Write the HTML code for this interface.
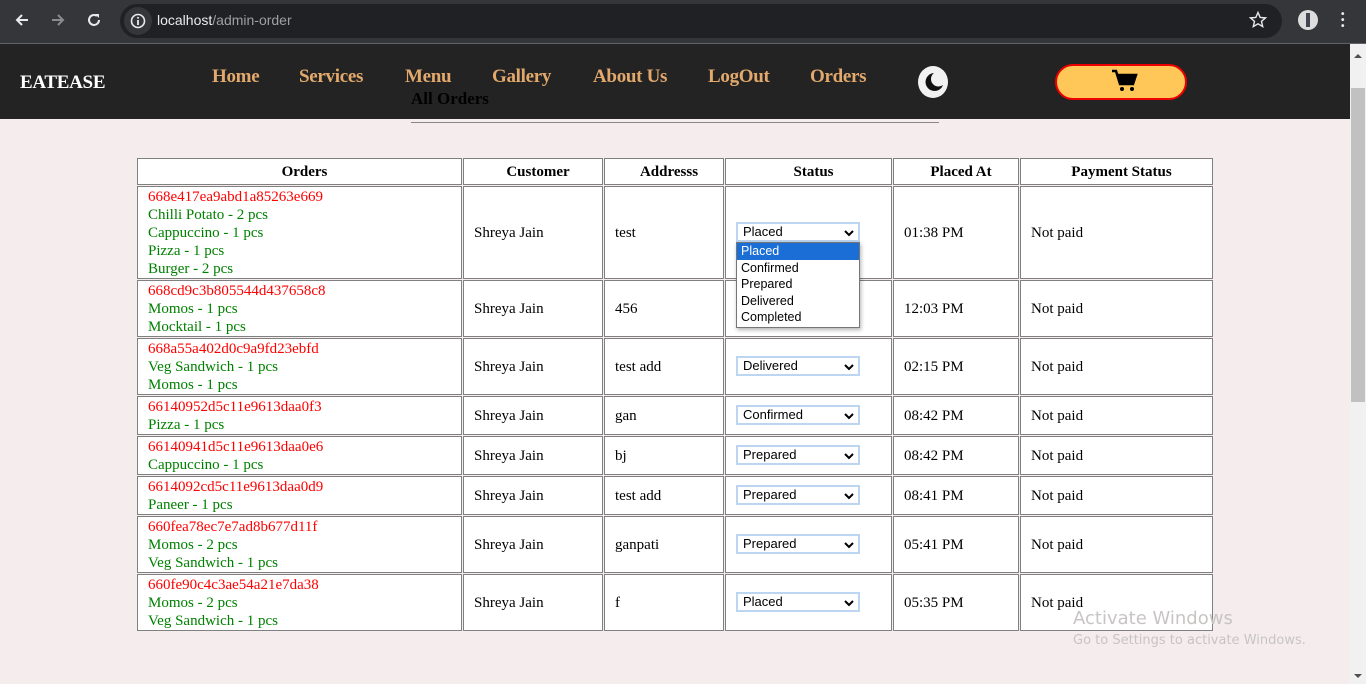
<!DOCTYPE html>
<html><head><meta charset="utf-8"><style>
*{margin:0;padding:0;box-sizing:border-box}
body{width:1366px;height:684px;overflow:hidden;background:#f5eded;font-family:"Liberation Serif",serif;position:relative}
.chrome{position:absolute;left:0;top:0;width:1366px;height:44px;background:#35363a;border-bottom:1px solid #5f6368}
.url{position:absolute;left:120px;top:4px;width:1162px;height:34px;border-radius:17px;background:#202124}
.nav{position:absolute;left:0;top:44px;width:1350px;height:75px;background:#232323}
.nav a{position:absolute;top:22px;color:#e3a96c;font-weight:bold;font-size:19px;text-decoration:none;letter-spacing:-0.3px}
.sb{position:absolute;left:1350px;top:44px;width:16px;height:640px;background:#f1f1f1}
.c{position:absolute;border:1px solid #808080;background:#fff;font-size:15px;display:flex;flex-direction:column;justify-content:center;padding-left:10px;line-height:18px;color:#000}
.h{font-weight:bold;align-items:center;padding-left:10px}
.r{color:#f00}.g{color:#008000}
.sel{position:absolute;width:124px;height:20px;border:2px solid #bcd5f0;background:#fff;font-family:"Liberation Sans",sans-serif;font-size:13px;line-height:16px;padding-left:5px;color:#000}
.sel svg{position:absolute;right:4px;top:5px}
</style></head><body>
<div class="chrome">
<svg style="position:absolute;left:14px;top:12px" width="16" height="16" viewBox="0 0 16 16"><path d="M14 8H3M8 3L3 8l5 5" stroke="#e8eaed" stroke-width="2" fill="none"/></svg>
<svg style="position:absolute;left:50px;top:12px" width="16" height="16" viewBox="0 0 16 16"><path d="M2 8h11M8 3l5 5-5 5" stroke="#8a8b8d" stroke-width="2" fill="none"/></svg>
<svg style="position:absolute;left:86px;top:12px" width="16" height="16" viewBox="0 0 16 16"><path d="M13 8a5 5 0 1 1-2-4" stroke="#e8eaed" stroke-width="2" fill="none"/><path d="M9 2h4v4z" fill="#e8eaed"/></svg>
<div class="url">
<div style="position:absolute;left:4px;top:3px;width:28px;height:28px;border-radius:14px;background:#35363a"></div>
<svg style="position:absolute;left:10px;top:9px" width="16" height="16" viewBox="0 0 16 16"><circle cx="8" cy="8" r="6.5" stroke="#e8eaed" stroke-width="1.6" fill="none"/><path d="M8 7v5M8 4v1.6" stroke="#e8eaed" stroke-width="1.8"/></svg>
<div style="position:absolute;left:37px;top:8px;font-family:'Liberation Sans',sans-serif;font-size:14px;color:#e8eaed">localhost<span style="color:#9aa0a6">/admin-order</span></div>
<svg style="position:absolute;left:1129px;top:7px" width="18" height="18" viewBox="0 0 18 18"><path d="M9 1.5l2.2 5 5.3.4-4 3.5 1.2 5.2L9 12.8 4.3 15.6l1.2-5.2-4-3.5 5.3-.4z" stroke="#e8eaed" stroke-width="1.4" fill="none"/></svg>
</div>
<div style="position:absolute;left:1298px;top:10px;width:20px;height:20px;border-radius:10px;background:#ddd"><div style="margin:3px 8px;width:4px;height:14px;background:#445"></div></div>
<div style="position:absolute;left:1341px;top:12px;width:4px;color:#e8eaed;font-size:10px;line-height:6px;font-family:sans-serif;font-weight:bold">•<br>•<br>•</div>
</div>
<div class="nav">
<div style="position:absolute;left:20px;top:28px;color:#fff;font-weight:bold;font-size:19px;letter-spacing:-0.3px">EATEASE</div>
<a style="left:212px">Home</a><a style="left:299px">Services</a><a style="left:405px">Menu</a><a style="left:492px">Gallery</a><a style="left:593px">About Us</a><a style="left:708px">LogOut</a><a style="left:810px">Orders</a>
<svg style="position:absolute;left:917px;top:21px" width="32" height="34" viewBox="0 0 32 34"><ellipse cx="16" cy="17" rx="15" ry="16" fill="#f2f2f2"/><path d="M17 8a9 9 0 1 0 9 12a7 7 0 0 1-9-12z" fill="#111"/></svg>
<div style="position:absolute;left:1055px;top:20px;width:132px;height:36px;border:2px solid #e00;border-radius:18px;background:#fec758"></div>
<svg style="position:absolute;left:1111px;top:25px" width="28" height="24" viewBox="0 0 28 24"><path d="M1 2h4l4 13h13l3-9H7" stroke="#000" stroke-width="2.5" fill="none"/><path d="M7 6h18l-3 9H10z" fill="#000"/><circle cx="11" cy="20" r="2" fill="#000"/><circle cx="21" cy="20" r="2" fill="#000"/></svg>
<div style="position:absolute;left:411px;top:45px;font-weight:bold;font-size:17px;color:#000">All Orders</div>
</div>
<div style="position:absolute;left:411px;top:122px;width:528px;height:1px;background:#888"></div>
<div class="sb"><div style="position:absolute;left:1px;top:44px;width:14px;height:314px;background:#c1c1c1"></div>
<div style="position:absolute;left:4px;top:10px;border:4px solid transparent;border-bottom:4px solid #505050;border-top:0"></div>
<div style="position:absolute;left:4px;top:630px;border:4px solid transparent;border-top:4px solid #505050;border-bottom:0"></div></div>

<div class="c h" style="left:137px;top:158px;width:325px;height:27px">Orders</div>
<div class="c h" style="left:463px;top:158px;width:140px;height:27px">Customer</div>
<div class="c h" style="left:604px;top:158px;width:120px;height:27px">Addresss</div>
<div class="c h" style="left:725px;top:158px;width:167px;height:27px">Status</div>
<div class="c h" style="left:893px;top:158px;width:126px;height:27px">Placed At</div>
<div class="c h" style="left:1020px;top:158px;width:193px;height:27px">Payment Status</div>

<div class="c" style="left:137px;top:186px;width:325px;height:93px"><span class="r">668e417ea9abd1a85263e669</span><span class="g">Chilli Potato - 2 pcs</span><span class="g">Cappuccino - 1 pcs</span><span class="g">Pizza - 1 pcs</span><span class="g">Burger - 2 pcs</span></div>
<div class="c" style="left:463px;top:186px;width:140px;height:93px">Shreya Jain</div>
<div class="c" style="left:604px;top:186px;width:120px;height:93px">test</div>
<div class="c" style="left:725px;top:186px;width:167px;height:93px"></div>
<div class="c" style="left:893px;top:186px;width:126px;height:93px">01:38 PM</div>
<div class="c" style="left:1020px;top:186px;width:193px;height:93px">Not paid</div>
<div class="c" style="left:137px;top:280px;width:325px;height:57px"><span class="r">668cd9c3b805544d437658c8</span><span class="g">Momos - 1 pcs</span><span class="g">Mocktail - 1 pcs</span></div>
<div class="c" style="left:463px;top:280px;width:140px;height:57px">Shreya Jain</div>
<div class="c" style="left:604px;top:280px;width:120px;height:57px">456</div>
<div class="c" style="left:725px;top:280px;width:167px;height:57px"></div>
<div class="c" style="left:893px;top:280px;width:126px;height:57px">12:03 PM</div>
<div class="c" style="left:1020px;top:280px;width:193px;height:57px">Not paid</div>
<div class="c" style="left:137px;top:338px;width:325px;height:57px"><span class="r">668a55a402d0c9a9fd23ebfd</span><span class="g">Veg Sandwich - 1 pcs</span><span class="g">Momos - 1 pcs</span></div>
<div class="c" style="left:463px;top:338px;width:140px;height:57px">Shreya Jain</div>
<div class="c" style="left:604px;top:338px;width:120px;height:57px">test add</div>
<div class="c" style="left:725px;top:338px;width:167px;height:57px"></div>
<div class="c" style="left:893px;top:338px;width:126px;height:57px">02:15 PM</div>
<div class="c" style="left:1020px;top:338px;width:193px;height:57px">Not paid</div>
<div class="c" style="left:137px;top:396px;width:325px;height:39px"><span class="r">66140952d5c11e9613daa0f3</span><span class="g">Pizza - 1 pcs</span></div>
<div class="c" style="left:463px;top:396px;width:140px;height:39px">Shreya Jain</div>
<div class="c" style="left:604px;top:396px;width:120px;height:39px">gan</div>
<div class="c" style="left:725px;top:396px;width:167px;height:39px"></div>
<div class="c" style="left:893px;top:396px;width:126px;height:39px">08:42 PM</div>
<div class="c" style="left:1020px;top:396px;width:193px;height:39px">Not paid</div>
<div class="c" style="left:137px;top:436px;width:325px;height:39px"><span class="r">66140941d5c11e9613daa0e6</span><span class="g">Cappuccino - 1 pcs</span></div>
<div class="c" style="left:463px;top:436px;width:140px;height:39px">Shreya Jain</div>
<div class="c" style="left:604px;top:436px;width:120px;height:39px">bj</div>
<div class="c" style="left:725px;top:436px;width:167px;height:39px"></div>
<div class="c" style="left:893px;top:436px;width:126px;height:39px">08:42 PM</div>
<div class="c" style="left:1020px;top:436px;width:193px;height:39px">Not paid</div>
<div class="c" style="left:137px;top:476px;width:325px;height:39px"><span class="r">6614092cd5c11e9613daa0d9</span><span class="g">Paneer - 1 pcs</span></div>
<div class="c" style="left:463px;top:476px;width:140px;height:39px">Shreya Jain</div>
<div class="c" style="left:604px;top:476px;width:120px;height:39px">test add</div>
<div class="c" style="left:725px;top:476px;width:167px;height:39px"></div>
<div class="c" style="left:893px;top:476px;width:126px;height:39px">08:41 PM</div>
<div class="c" style="left:1020px;top:476px;width:193px;height:39px">Not paid</div>
<div class="c" style="left:137px;top:516px;width:325px;height:57px"><span class="r">660fea78ec7e7ad8b677d11f</span><span class="g">Momos - 2 pcs</span><span class="g">Veg Sandwich - 1 pcs</span></div>
<div class="c" style="left:463px;top:516px;width:140px;height:57px">Shreya Jain</div>
<div class="c" style="left:604px;top:516px;width:120px;height:57px">ganpati</div>
<div class="c" style="left:725px;top:516px;width:167px;height:57px"></div>
<div class="c" style="left:893px;top:516px;width:126px;height:57px">05:41 PM</div>
<div class="c" style="left:1020px;top:516px;width:193px;height:57px">Not paid</div>
<div class="c" style="left:137px;top:574px;width:325px;height:57px"><span class="r">660fe90c4c3ae54a21e7da38</span><span class="g">Momos - 2 pcs</span><span class="g">Veg Sandwich - 1 pcs</span></div>
<div class="c" style="left:463px;top:574px;width:140px;height:57px">Shreya Jain</div>
<div class="c" style="left:604px;top:574px;width:120px;height:57px">f</div>
<div class="c" style="left:725px;top:574px;width:167px;height:57px"></div>
<div class="c" style="left:893px;top:574px;width:126px;height:57px">05:35 PM</div>
<div class="c" style="left:1020px;top:574px;width:193px;height:57px">Not paid</div>

<div class="sel" style="left:736px;top:222px">Placed<svg width="10" height="8" viewBox="0 0 10 8"><path d="M1 2l4 4 4-4" stroke="#000" stroke-width="2" fill="none"/></svg></div>
<div class="sel" style="left:736px;top:356px">Delivered<svg width="10" height="8" viewBox="0 0 10 8"><path d="M1 2l4 4 4-4" stroke="#000" stroke-width="2" fill="none"/></svg></div>
<div class="sel" style="left:736px;top:405px">Confirmed<svg width="10" height="8" viewBox="0 0 10 8"><path d="M1 2l4 4 4-4" stroke="#000" stroke-width="2" fill="none"/></svg></div>
<div class="sel" style="left:736px;top:445px">Prepared<svg width="10" height="8" viewBox="0 0 10 8"><path d="M1 2l4 4 4-4" stroke="#000" stroke-width="2" fill="none"/></svg></div>
<div class="sel" style="left:736px;top:485px">Prepared<svg width="10" height="8" viewBox="0 0 10 8"><path d="M1 2l4 4 4-4" stroke="#000" stroke-width="2" fill="none"/></svg></div>
<div class="sel" style="left:736px;top:534px">Prepared<svg width="10" height="8" viewBox="0 0 10 8"><path d="M1 2l4 4 4-4" stroke="#000" stroke-width="2" fill="none"/></svg></div>
<div class="sel" style="left:736px;top:592px">Placed<svg width="10" height="8" viewBox="0 0 10 8"><path d="M1 2l4 4 4-4" stroke="#000" stroke-width="2" fill="none"/></svg></div>

<div style="position:absolute;left:736px;top:242px;width:124px;height:86px;background:#fff;border:1px solid #767676;box-shadow:1px 2px 4px rgba(0,0,0,.3);font-family:'Liberation Sans',sans-serif;font-size:12.5px;line-height:16.5px;color:#000">
<div style="background:#1a6ed6;color:#fff;padding-left:4px">Placed</div>
<div style="padding-left:4px">Confirmed</div><div style="padding-left:4px">Prepared</div><div style="padding-left:4px">Delivered</div><div style="padding-left:4px">Completed</div>
</div>

<div style="position:absolute;left:1073px;top:608px;font-family:'DejaVu Sans','Liberation Sans',sans-serif;font-size:18px;color:#c8c4c4">Activate Windows</div>
<div style="position:absolute;left:1073px;top:633px;font-family:'DejaVu Sans','Liberation Sans',sans-serif;font-size:13px;color:#c8c4c4">Go to Settings to activate Windows.</div>
</body></html>
